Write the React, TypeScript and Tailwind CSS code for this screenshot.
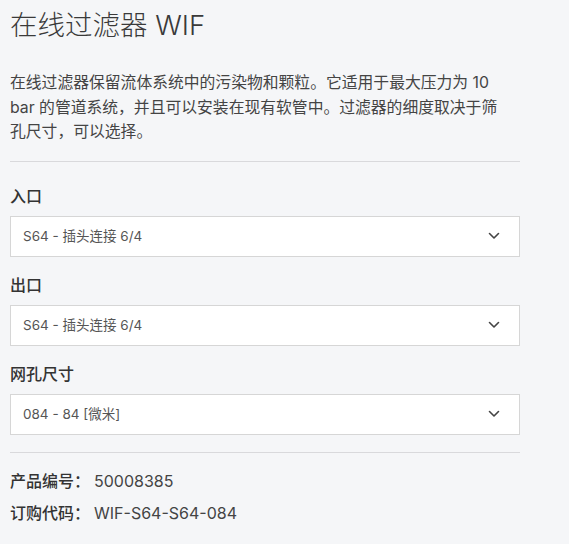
import React from "react";

const font = { fontFamily: '"Inter", "Noto Sans CJK SC", sans-serif' };

function Chevron() {
  return (
    <svg width="12" height="8" viewBox="0 0 12 8" fill="none">
      <path d="M1.5 1.5L6 6L10.5 1.5" stroke="#444" strokeWidth="1.6" strokeLinecap="round" strokeLinejoin="round" />
    </svg>
  );
}

function Field({ label, value }: { label: string; value: string }) {
  return (
    <div className="flex flex-col">
      <div className="text-[16px] leading-[20px] font-medium text-[#333] mb-[10px]">{label}</div>
      <div className="h-[41px] bg-white border border-[#d6d6d6] flex items-center justify-between pl-[12px] pr-[19px]">
        <span className="text-[13.5px] text-[#555]">{value}</span>
        <Chevron />
      </div>
    </div>
  );
}

export default function App() {
  return (
    <div className="min-h-[544px] w-full bg-[#f5f6f8]" style={font}>
      <div className="w-[510px] ml-[10px] pt-[8px]">
        <h1 className="text-[27.5px] leading-[34px] text-[#3a3a3a] font-light">在线过滤器 WIF</h1>
        <p className="mt-[29px] w-[500px] text-[15.8px] leading-[24.5px] text-[#444]">
          在线过滤器保留流体系统中的污染物和颗粒。它适用于最大压力为 10 bar 的管道系统，并且可以安装在现有软管中。过滤器的细度取决于筛孔尺寸，可以选择。
        </p>
        <div className="mt-[16px] h-px bg-[#d9d9dc]" />
        <div className="mt-[24px] flex flex-col gap-[18px]">
          <Field label="入口" value="S64 - 插头连接 6/4" />
          <Field label="出口" value="S64 - 插头连接 6/4" />
          <Field label="网孔尺寸" value="084 - 84 [微米]" />
        </div>
        <div className="mt-[17px] h-px bg-[#d9d9dc]" />
        <div className="mt-[16px] flex flex-col gap-[8px] text-[16px] leading-[24px] text-[#333]">
          <div className="flex">
            <span className="font-medium">产品编号：</span>
            <span className="pl-[4px] text-[#444]">50008385</span>
          </div>
          <div className="flex">
            <span className="font-medium">订购代码：</span>
            <span className="pl-[4px] text-[#444]">WIF-S64-S64-084</span>
          </div>
        </div>
      </div>
    </div>
  );
}
